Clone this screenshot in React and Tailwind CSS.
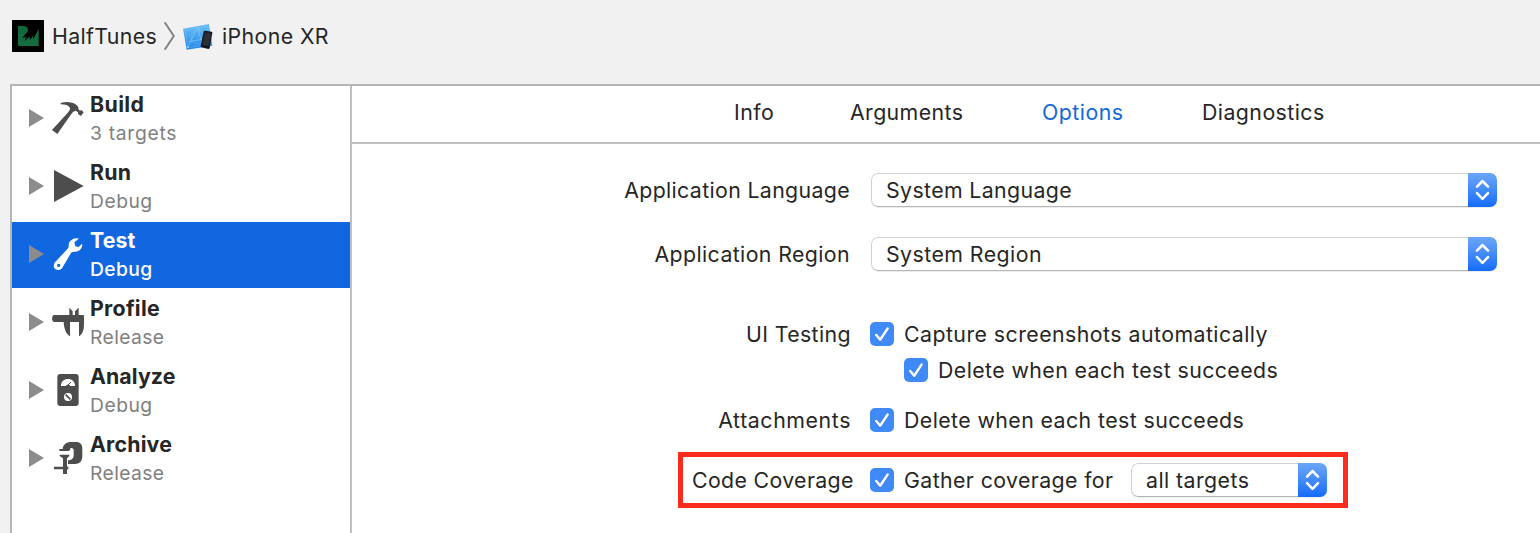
import React from "react";

function AppIcon() {
  return (
    <svg className="h-8 w-8 shrink-0" viewBox="36 30 96 96">
      <defs>
        <linearGradient id="leaf" x1="0" y1="0" x2="0" y2="1">
          <stop offset="0" stopColor="#0c6a3a" />
          <stop offset="1" stopColor="#156c40" />
        </linearGradient>
      </defs>
      <rect x="36" y="30" width="96" height="96" fill="#000" />
      <path d="M54 108V48H68C78 48 84 53 84 60C84 66 81 68 76 72L67 84L79 80L73 94L88 80L91 89L98 78L100 87L116 57V108Z" fill="url(#leaf)" />
    </svg>
  );
}

function DeviceIcon() {
  return (
    <svg className="h-[30px] w-8 shrink-0" viewBox="546 36 96 90">
      <defs>
        <linearGradient id="sky" x1="0" y1="0" x2="0" y2="1">
          <stop offset="0" stopColor="#6cc0f5" />
          <stop offset="1" stopColor="#2385e8" />
        </linearGradient>
      </defs>
      <path d="M549 56L627 42L637 107L560 119Z" fill="url(#sky)" />
      <g fill="none" stroke="#8accf9" strokeWidth="1.8">
        <path d="M555 61L622 49L631 102L564 113Z" strokeWidth="1" />
        <path d="M566 107L590 55L596 53L601 66M594 61L607 101M566 95L606 88" />
        <circle cx="593" cy="82" r="20" strokeWidth="1" />
      </g>
      <circle cx="564" cy="111" r="2.5" fill="#e8f6ff" />
      <path d="M615 62L635 65Q638 66 637 69L629 114Q628 117 625 117L604 112Q601 111 602 108L611 65Q612 62 615 62Z" fill="#15171a" />
      <path d="M616 67L633 70L626 108L607 104Z" fill="#2d3136" />
    </svg>
  );
}

function Hammer() {
  return (
    <path
      transform="translate(-153 -63)"
      d="M182 69C194 65 207 65 216 68C226 71 233 76 235 82L235 87L240 92L244 90L251 97L243 108L234 102L234 97L227 92C222 93 218 96 214 102L172 162L156 150L202 100C207 94 211 88 210 84C206 76 196 73 182 73Z"
    />
  );
}

function Play() {
  return <path transform="translate(-153 -267)" d="M162 270L251 318L162 366Z" />;
}

function Wrench() {
  return (
    <g transform="translate(-153 -63)">
      <path
        fillRule="evenodd"
        d="M165 139L203 98C207 94 206 90 206 86C207 74 220 64 235 67L235 69L223 79L226 91L236 93L245 84L247 85C247 98 238 107 226 107C220 107 216 107 213 111L187 155C183 162 173 164 166 159C160 154 160 145 165 139ZM176 143A5 5 0 1 0 176 153A5 5 0 1 0 176 143Z"
      />
    </g>
  );
}

function Caliper() {
  return (
    <path
      transform="translate(-153 -267)"
      d="M163 297H208V275L218 286V297H225V286L236 275V297H249Q252 297 252 301V324C252 342 248 354 237 361V318H210V361C198 353 192 338 191 318H163C154 318 154 297 163 297Z"
    />
  );
}

function Meter() {
  return (
    <g transform="translate(-153 -69)">
      <rect x="172" y="72" width="64" height="96" rx="9" />
      <path d="M183 108C183 94 192 87 204 87C216 87 225 94 225 108H211C209 103 199 103 197 108Z" fill="#fff" />
      <path d="M203 106L213 96" stroke="#4d4d4d" strokeWidth="3" />
      <circle cx="204" cy="141" r="12" fill="#fff" />
      <path d="M197 134L211 148" stroke="#4d4d4d" strokeWidth="5" />
    </g>
  );
}

function Clamp() {
  return (
    <g transform="translate(-153 -273)">
      <path d="M188 294C192 281 201 276 215 276H228C241 276 247 283 247 296V318C247 333 239 342 225 342H204V331C216 330 221 325 221 315V301C221 295 217 293 211 294V299L206 303H178V297H188Z" />
      <path d="M179 314H208V318L201 325V372H189V358H162V350H189V325L179 318Z" />
      <path d="M200 350H205V358H200Z" />
    </g>
  );
}

const actions = [
  { name: "Build", detail: "3 targets", Icon: Hammer, title: "tracking-[0.4px]", sub: "tracking-[0.7px]" },
  { name: "Run", detail: "Debug", Icon: Play, title: "tracking-[0.3px]", sub: "tracking-[0.5px]" },
  { name: "Test", detail: "Debug", Icon: Wrench, selected: true, title: "tracking-[0.1px]", sub: "tracking-[0.4px]" },
  { name: "Profile", detail: "Release", Icon: Caliper, title: "tracking-[0.3px]", sub: "tracking-[0.4px]" },
  { name: "Analyze", detail: "Debug", Icon: Meter, title: "tracking-[0.1px]", sub: "tracking-[0.5px]" },
  { name: "Archive", detail: "Release", Icon: Clamp, title: "tracking-[0.2px]", sub: "tracking-[0.4px]" },
];

function ActionRow({ name, detail, Icon, selected, title, sub }) {
  return (
    <li className={`flex h-[66px] pl-[17px] ${selected ? "bg-[#1167df] text-white" : "text-[#262626]"}`}>
      <svg className="mt-[23px] h-[18px] w-[15px] shrink-0" viewBox="0 0 15 18">
        <path d="M0 0L15 9L0 18Z" fill="#8c8c8c" />
      </svg>
      <svg className={`mt-[15px] ml-[7px] h-[34px] w-[34px] shrink-0 ${selected ? "fill-white" : "fill-[#4d4d4d]"}`} viewBox="0 0 102 102">
        <Icon />
      </svg>
      <div className="ml-[5px] pt-1">
        <div className={`h-7 text-[21.3px] leading-7 font-bold ${title}`}>{name}</div>
        <div className={`h-[30px] text-[19.3px] leading-[30px] ${sub} ${selected ? "font-medium text-white" : "text-[#808080]"}`}>{detail}</div>
      </div>
    </li>
  );
}

function Checkbox() {
  return (
    <span className="h-6 w-6 shrink-0 rounded-[5px] bg-[#3f89f9]">
      <svg className="h-6 w-6" viewBox="0 0 24 24" fill="none" strokeLinecap="round" strokeLinejoin="round">
        <path d="M6.5 14.2L10.2 18.8L17.8 7.6" stroke="#2466cf" strokeOpacity=".45" strokeWidth="2.4" />
        <path d="M6.2 13L10.2 17.8L17.6 6.6" stroke="#fff" strokeWidth="2.5" />
      </svg>
    </span>
  );
}

function Select({ children, width, tracking }) {
  return (
    <div className={`flex h-[34px] shrink-0 overflow-hidden rounded-[7px] shadow-[0_1px_1px_rgba(0,0,0,0.08)] ${width}`}>
      <div className={`flex-1 rounded-l-[7px] border border-r-0 border-[#d0d0d0] border-b-[#b5b5b5] bg-white pl-[14px] leading-[33px] ${tracking}`}>{children}</div>
      <div className="w-[29px] bg-linear-to-b from-[#6ba6f8] to-[#116bfb]">
        <svg className="h-[34px] w-[29px]" viewBox="0 0 29 34" fill="none" stroke="#fff" strokeWidth="2.5" strokeLinecap="round" strokeLinejoin="round">
          <path d="M9 13.6L14.5 8L20 13.6M9 20.2L14.5 25.8L20 20.2" />
        </svg>
      </div>
    </div>
  );
}

function Label({ children, className = "" }) {
  return <div className={`w-[499px] shrink-0 text-right ${className}`}>{children}</div>;
}

export default function App() {
  return (
    <div className="flex h-[533px] w-[1540px] flex-col overflow-hidden bg-[#f1f1f1] font-[Inter,sans-serif] text-[21.3px] whitespace-nowrap text-[#262626]">
      <header className="flex h-[84px] items-start pt-5 pl-3">
        <AppIcon />
        <span className="ml-2 w-[112px] leading-8 tracking-[0.35px]">HalfTunes</span>
        <svg className="mt-[2px] h-7 w-[11px] shrink-0" viewBox="0 0 11 28" fill="none" stroke="#808080" strokeWidth="1.9">
          <path d="M0.7 0.3L9.8 14L0.7 27.7" />
        </svg>
        <span className="mt-[2px] ml-[7px]"><DeviceIcon /></span>
        <span className="ml-2 leading-8 tracking-[0.4px]">iPhone XR</span>
      </header>

      <div className="ml-[10px] flex flex-1 border-t-2 border-l-2 border-[#b5b5b5]">
        <ul className="flex w-[338px] shrink-0 flex-col gap-[2px] bg-white">
          {actions.map((a) => (
            <ActionRow key={a.name} {...a} />
          ))}
        </ul>

        <main className="flex flex-1 flex-col border-l-2 border-[#bfbfbf] bg-white tracking-[0.4px]">
          <nav className="flex h-[58px] shrink-0 border-b-2 border-[#bfbfbf] pl-[382px] leading-[53px]">
            <span className="w-[116px] tracking-[0.45px]">Info</span>
            <span className="w-[192px] tracking-[0.4px]">Arguments</span>
            <span className="w-[160px] tracking-[0.5px] text-[#1268d8]">Options</span>
            <span className="tracking-[0.45px]">Diagnostics</span>
          </nav>

          <section className="flex flex-col pt-[29px]">
            <div className="flex h-[34px]">
              <Label className="-ml-px leading-[35px] tracking-[0.36px]">Application Language</Label>
              <div className="ml-[21px]"><Select width="w-[626px]" tracking="tracking-[0.38px]">System Language</Select></div>
            </div>
            <div className="mt-[30px] flex h-[34px]">
              <Label className="-ml-px leading-[35px]">Application Region</Label>
              <div className="ml-[21px]"><Select width="w-[626px]" tracking="tracking-[0.45px]">System Region</Select></div>
            </div>

            <div className="mt-[51px] flex h-6 leading-6">
              <Label>UI Testing</Label>
              <div className="ml-[19px] flex gap-[10px]">
                <Checkbox />
                <span className="tracking-[0.46px]">Capture screenshots automatically</span>
              </div>
            </div>
            <div className="mt-3 ml-[552px] flex h-6 gap-[10px] leading-6">
              <Checkbox />
              <span className="tracking-[0.42px]">Delete when each test succeeds</span>
            </div>
            <div className="mt-[26px] flex h-6 leading-6">
              <Label className="tracking-[0.6px]">Attachments</Label>
              <div className="ml-[19px] flex gap-[10px]">
                <Checkbox />
                <span className="tracking-[0.42px]">Delete when each test succeeds</span>
              </div>
            </div>

            <div className="mt-5 ml-[326px] flex h-[56px] w-[670px] items-center border-[5px] border-[#fb2c1d] pl-[9px] leading-6">
              <span className="w-[178px] tracking-[0.36px]">Code Coverage</span>
              <Checkbox />
              <span className="mr-[17px] ml-[10px] w-[210px]">Gather coverage for</span>
              <Select width="w-[196px]" tracking="tracking-[0.45px]">all targets</Select>
            </div>
          </section>
        </main>
      </div>
    </div>
  );
}
